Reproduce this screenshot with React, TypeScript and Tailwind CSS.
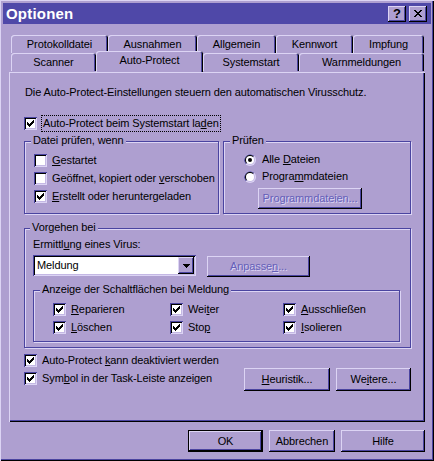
import React from 'react';

const raised =
  'bg-[#ae9fd0] shadow-[inset_-1px_-1px_0_#000,inset_1px_1px_0_#dcd4f4,inset_-2px_-2px_0_#4a44a0]';
const sunken =
  'shadow-[inset_1px_1px_0_#4a44a0,inset_-1px_-1px_0_#dcd4f4,inset_2px_2px_0_#000,inset_-2px_-2px_0_#c4b8e4]';
const disabledText = 'text-[#6460b8] [text-shadow:1px_1px_0_#dcd4f4]';

const checkPixels = [
  [6, 0, 1], [5, 1, 2], [0, 2, 1], [4, 2, 3], [0, 3, 2], [3, 3, 3], [0, 4, 5], [1, 5, 3], [2, 6, 1],
];

function CheckMark() {
  return (
    <svg width="7" height="7" viewBox="0 0 7 7" shapeRendering="crispEdges">
      {checkPixels.map(([x, y, w], i) => (
        <rect key={i} x={x} y={y} width={w} height={1} fill="#000" />
      ))}
    </svg>
  );
}

function Box({ checked }: { checked?: boolean }) {
  return (
    <span className={`flex h-[13px] w-[13px] shrink-0 items-center justify-center bg-white ${sunken}`}>
      {checked && <CheckMark />}
    </span>
  );
}

function CheckItem({ checked, children }: { checked?: boolean; children: React.ReactNode }) {
  return (
    <div className="flex h-[18px] items-center gap-[5px]">
      <Box checked={checked} />
      <span className="whitespace-nowrap">{children}</span>
    </div>
  );
}

function Radio({ on, children }: { on?: boolean; children: React.ReactNode }) {
  return (
    <div className="flex h-[17px] items-center gap-[6px]">
      <svg width="12" height="12" viewBox="0 0 12 12">
        <circle cx="6" cy="6" r="6" fill="#dcd4f4" />
        <path d="M1.76 10.24A6 6 0 0 1 10.24 1.76Z" fill="#4a44a0" />
        <circle cx="6" cy="6" r="5" fill="#c4b8e4" />
        <path d="M2.46 9.54A5 5 0 0 1 9.54 2.46Z" fill="#000" />
        <circle cx="6" cy="6" r="4" fill="#fff" />
        {on && <circle cx="6" cy="6" r="2" fill="#000" />}
      </svg>
      <span className="whitespace-nowrap">{children}</span>
    </div>
  );
}

function Group({
  label,
  labelLeft,
  className,
  children,
}: {
  label: string;
  labelLeft: string;
  className: string;
  children: React.ReactNode;
}) {
  return (
    <div
      className={`relative border border-[#4a44a0] shadow-[inset_1px_1px_0_#dcd4f4,1px_1px_0_#dcd4f4] ${className}`}
    >
      <span className={`absolute top-[-8px] ${labelLeft} bg-[#ae9fd0] px-[2px] whitespace-nowrap`}>{label}</span>
      {children}
    </div>
  );
}

function Btn({
  children,
  className,
  disabled,
}: {
  children: React.ReactNode;
  className: string;
  disabled?: boolean;
}) {
  return (
    <div className={`flex items-center justify-center ${raised} ${disabled ? disabledText : ''} ${className}`}>
      {children}
    </div>
  );
}

function Tab({ label, className }: { label: string; className: string }) {
  return (
    <div
      className={`flex h-[18px] items-center justify-center rounded-t-[3px] bg-[#ae9fd0] shadow-[inset_1px_1px_0_#dcd4f4,inset_-1px_0_0_#000,inset_-2px_0_0_#4a44a0] ${className}`}
    >
      {label}
    </div>
  );
}

export default function App() {
  return (
    <div
      className={`h-[461px] w-[434px] bg-[#ae9fd0] p-[3px] font-['Liberation_Sans',Arial,sans-serif] text-[11px] leading-[13px] tracking-[-0.1px] text-black shadow-[inset_1px_1px_0_#dcd4f4,inset_-1px_-1px_0_#000,inset_-2px_-2px_0_#4a44a0]`}
    >
      {/* title bar */}
      <div className="flex h-[21px] items-center bg-[#4f48a8] pl-[3px] pr-[4px]">
        <span className="text-[15px] leading-[18px] font-bold tracking-[0.2px] text-white">Optionen</span>
        <div className="ml-auto flex gap-[3px]">
          <div className={`flex h-[16px] w-[18px] items-center justify-center text-[13px] font-bold ${raised}`}>?</div>
          <div className={`flex h-[16px] w-[18px] items-center justify-center ${raised}`}>
            <svg width="8" height="7" viewBox="0 0 8 7" shapeRendering="crispEdges">
              <path
                d="M0 0h2v1h-2zM6 0h2v1h-2zM1 1h2v1h-2zM5 1h2v1h-2zM2 2h4v1h-4zM3 3h2v1h-2zM2 4h4v1h-4zM1 5h2v1h-2zM5 5h2v1h-2zM0 6h2v1h-2zM6 6h2v1h-2z"
                fill="#000"
              />
            </svg>
          </div>
        </div>
      </div>

      <div className="mt-[11px] px-[6px]">
        {/* tabs */}
        <div className="ml-[2px] flex">
          <Tab label="Protokolldatei" className="w-[97px]" />
          <Tab label="Ausnahmen" className="w-[89px]" />
          <Tab label="Allgemein" className="w-[79px]" />
          <Tab label="Kennwort" className="w-[77px]" />
          <Tab label="Impfung" className="w-[71px]" />
        </div>
        <div className="ml-[2px] flex items-start">
          <Tab label="Scanner" className="w-[85px]" />
          <div className="relative z-10 -mt-[2px] flex h-[21px] w-[107px] items-start justify-center rounded-t-[3px] bg-[#ae9fd0] pt-[3px] shadow-[inset_1px_1px_0_#dcd4f4,inset_-1px_0_0_#000,inset_-2px_0_0_#4a44a0]">
            Auto-Protect
          </div>
          <Tab label="Systemstart" className="w-[96px]" />
          <Tab label="Warnmeldungen" className="w-[125px]" />
        </div>

        {/* panel */}
        <div className="h-[350px] w-[416px] pl-[15px] pt-[14px] shadow-[inset_1px_1px_0_#dcd4f4,inset_-1px_-1px_0_#000,inset_-2px_-2px_0_#4a44a0]">
          <div className="pl-[1px]">Die Auto-Protect-Einstellungen steuern den automatischen Virusschutz.</div>

          <div className="mt-[16px] flex h-[17px] items-center gap-[4px]">
            <Box checked />
            <span className="flex h-[17px] items-center border border-dotted border-black px-[1px]">
              Auto-Protect beim Systemstart la<u>d</u>en
            </span>
          </div>

          <div className="mt-[9px] flex gap-[4px]">
            <Group label="Datei prüfen, wenn" labelLeft="left-[6px]" className="h-[73px] w-[195px] pl-[9px] pt-[9px]">
              <CheckItem>
                <u>G</u>estartet
              </CheckItem>
              <CheckItem>
                Geöffnet, kopiert oder <u>v</u>erschoben
              </CheckItem>
              <CheckItem checked>
                <u>E</u>rstellt oder heruntergeladen
              </CheckItem>
            </Group>
            <Group label="Prüfen" labelLeft="left-[6px]" className="h-[73px] w-[188px] pl-[20px] pt-[9px]">
              <Radio on>
                Alle <u>D</u>ateien
              </Radio>
              <Radio>
                Progra<u>m</u>mdateien
              </Radio>
              <Btn disabled className="ml-[14px] mt-[3px] h-[21px] w-[104px]">
                Programmdateien...
              </Btn>
            </Group>
          </div>

          <Group label="Vorgehen bei" labelLeft="left-[5px]" className="mt-[14px] h-[120px] w-[387px] pl-[8px] pt-[9px]">
            <div>
              Ermittl<u>u</u>ng eines Virus:
            </div>
            <div className="mt-[4px] flex items-start">
              <div className={`flex h-[21px] w-[163px] items-center bg-white pl-[4px] pr-[2px] ${sunken}`}>
                <span>Meldung</span>
                <div
                  className={`ml-auto flex h-[17px] w-[16px] items-center justify-center ${raised}`}
                >
                  <svg width="7" height="4" viewBox="0 0 7 4" shapeRendering="crispEdges">
                    <path d="M0 0h7v1h-7zM1 1h5v1h-5zM2 2h3v1h-3zM3 3h1v1h-1z" fill="#000" />
                  </svg>
                </div>
              </div>
              <Btn disabled className="ml-[11px] mt-[1px] h-[21px] w-[103px]">
                <span>
                  Anpasse<u>n</u>...
                </span>
              </Btn>
            </div>
            <Group
              label="Anzeige der Schaltflächen bei Meldung"
              labelLeft="left-[6px]"
              className="mt-[13px] h-[52px] w-[367px] pl-[19px] pt-[9px]"
            >
              <div className="grid grid-cols-[117px_113px_1fr]">
                <CheckItem checked>
                  <u>R</u>eparieren
                </CheckItem>
                <CheckItem checked>
                  Wei<u>t</u>er
                </CheckItem>
                <CheckItem checked>
                  <u>A</u>usschließen
                </CheckItem>
                <CheckItem checked>
                  <u>L</u>öschen
                </CheckItem>
                <CheckItem checked>
                  Sto<u>p</u>
                </CheckItem>
                <CheckItem checked>
                  <u>I</u>solieren
                </CheckItem>
              </div>
            </Group>
          </Group>

          <div className="mt-[3px]">
            <CheckItem checked>
              Auto-Protect <u>k</u>ann deaktiviert werden
            </CheckItem>
          </div>
          <div className="-mt-[1px] flex items-start pr-[14px]">
            <div className="mt-[1px]">
              <CheckItem checked>
                Sym<u>b</u>ol in der Task-Leiste anzeigen
              </CheckItem>
            </div>
            <Btn className="ml-auto h-[23px] w-[86px]">
              <span>
                <u>H</u>euristik...
              </span>
            </Btn>
            <Btn className="ml-[6px] h-[23px] w-[75px]">
              <span>
                We<u>i</u>tere...
              </span>
            </Btn>
          </div>
        </div>

        {/* bottom buttons */}
        <div className="mt-[8px] flex justify-end">
          <div className="h-[22px] w-[75px] border border-black">
            <Btn className="h-full w-full">OK</Btn>
          </div>
          <Btn className="ml-[6px] h-[22px] w-[66px]">Abbrechen</Btn>
          <Btn className="ml-[6px] h-[22px] w-[84px]">Hilfe</Btn>
        </div>
      </div>
    </div>
  );
}
